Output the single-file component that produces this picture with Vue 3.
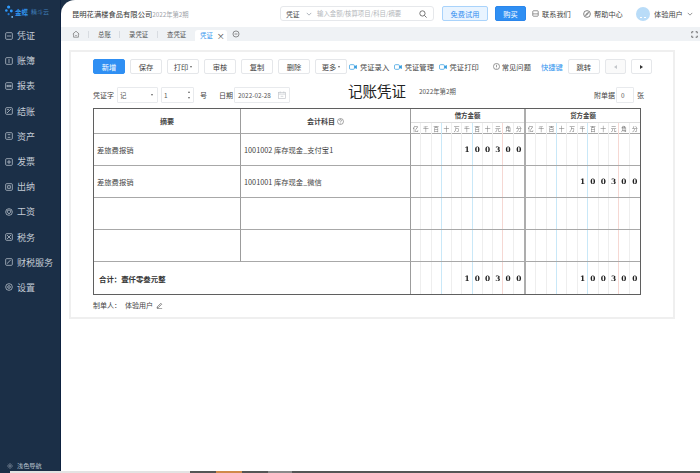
<script setup>
const navItems = [
  { label: "凭证", icon: "M3 6h6" },
  { label: "账簿", icon: "M6 3v6" },
  { label: "报表", icon: "M3 5h6v2H3z" },
  { label: "结账", icon: "M3 9l6-6M3 4h3" },
  { label: "资产", icon: "M4 4h4M4 8h4" },
  { label: "发票", icon: "M3 6h6M6 3v6" },
  { label: "出纳", icon: "M4 4h4v4H4z" },
  { label: "工资", icon: "M6 3l2.5 1v2L6 9 3.5 6V4z", round: true },
  { label: "税务", icon: "M3 3l6 6M9 3L3 9" },
  { label: "财税服务", icon: "M3.5 8.5l2-3 3-2" },
  { label: "设置", icon: "M4 6a2 2 0 1 0 4 0a2 2 0 1 0-4 0", round: true },
];

const tools = ["保存", "打印", "审核", "复制", "删除", "更多"];
const carets = ["打印", "更多"];
const links = ["凭证录入", "凭证管理", "凭证打印"];
const units = ["亿", "千", "百", "十", "万", "千", "百", "十", "元", "角", "分"];
const amount = ["", "", "", "", "", "1", "0", "0", "3", "0", "0"];
const empty = units.map(() => "");

const rows = [
  { summary: "差旅费报销", subject: "1001002 库存现金_支付宝1", debit: amount, credit: empty },
  { summary: "差旅费报销", subject: "1001001 库存现金_微信", debit: empty, credit: amount },
  { summary: "", subject: "", debit: empty, credit: empty },
  { summary: "", subject: "", debit: empty, credit: empty },
];

// 每隔三位一条蓝线，元角之间红线
const lineClass = (i) => {
  if (i === 2 || i === 5) return "line-blue";
  if (i === 8) return "line-red";
  return i === 10 ? "line-none" : "";
};
</script>

<template>
  <div class="page">
    <div class="shell">
      <aside class="sidebar">
        <div class="logo">
          <svg class="logo-mark" viewBox="0 0 10 16">
            <circle cx="4" cy="3" r="1.8" fill="#2f9bff" />
            <circle cx="1.5" cy="7" r="1.4" fill="#2f9bff" />
            <circle cx="7" cy="7.5" r="1.6" fill="#2f9bff" />
            <circle cx="4" cy="11" r="1.2" fill="#1f78d6" />
            <circle cx="8" cy="14" r="1" fill="#7cc4ff" />
          </svg>
          <span class="logo-name">金蝶</span>
          <span class="logo-sub">精斗云</span>
        </div>
        <nav class="nav">
          <div v-for="item in navItems" :key="item.label" class="nav-item">
            <svg class="nav-icon" viewBox="0 0 12 12" fill="none" stroke="#c3cbd5" stroke-width="1.1">
              <circle v-if="item.round" cx="6" cy="6" r="5" />
              <rect v-else x="1" y="1" width="10" height="10" rx="1.5" />
              <path :d="item.icon" />
            </svg>
            <span>{{ item.label }}</span>
          </div>
        </nav>
        <div class="nav-foot">
          <svg class="sun" viewBox="0 0 10 10" fill="none" stroke="#b9c2cd" stroke-width="0.9">
            <circle cx="5" cy="5" r="2" />
            <path d="M5 0v1.5M5 8.5V10M0 5h1.5M8.5 5H10M1.5 1.5l1 1M7.5 7.5l1 1M8.5 1.5l-1 1M2.5 7.5l-1 1" />
          </svg>
          <span>浅色导航</span>
        </div>
      </aside>

      <main class="main">
        <header class="topbar">
          <div class="company">昆明花满楼食品有限公司<span class="period">2022年第2期</span></div>
          <div class="search">
            <span class="search-type">凭证</span>
            <svg class="chevron" viewBox="0 0 8 5" fill="none" stroke="#8a929c" stroke-width="0.9"><path d="M1 1l3 3 3-3" /></svg>
            <span class="search-hint">输入金额/核算项目/科目/摘要</span>
            <svg class="search-icon" viewBox="0 0 10 10" fill="none" stroke="#555" stroke-width="1"><circle cx="4.3" cy="4.3" r="3.3" /><path d="M6.8 6.8L9.5 9.5" /></svg>
          </div>
          <button class="btn-trial">免费试用</button>
          <button class="btn-buy">购买</button>
          <div class="top-link contact">
            <svg viewBox="0 0 9 9" fill="none" stroke="#555" stroke-width="0.8"><rect x="1" y="1" width="7" height="7" rx="1" /><path d="M1 5h7" /></svg>
            <span>联系我们</span>
          </div>
          <div class="top-link help">
            <svg viewBox="0 0 9 9" fill="none" stroke="#555" stroke-width="0.8"><circle cx="4.5" cy="4.5" r="3.8" /><path d="M6.2 2.8L5 5 2.8 6.2 4 4z" /></svg>
            <span>帮助中心</span>
          </div>
          <div class="avatar"><i></i><i></i></div>
          <span class="user">体验用户</span>
          <svg class="chevron user-arrow" viewBox="0 0 8 5" fill="none" stroke="#666" stroke-width="0.9"><path d="M1 1l3 3 3-3" /></svg>
        </header>

        <div class="tabs">
          <svg class="home" viewBox="0 0 10 10" fill="none" stroke="#666" stroke-width="0.8"><path d="M1 5l4-3.5L9 5M2 4.5V9h6V4.5M4 7h2" /></svg>
          <span class="tab-sep"></span>
          <span class="tab tab-a">总账</span>
          <span class="tab-sep"></span>
          <span class="tab">录凭证</span>
          <span class="tab-sep"></span>
          <span class="tab">查凭证</span>
          <div class="tab-active">
            <span>凭证</span>
            <span class="tab-close">×</span>
          </div>
          <svg class="tab-more" viewBox="0 0 10 10" fill="none" stroke="#555" stroke-width="0.8"><circle cx="5" cy="5" r="3.8" /><path d="M3.2 5h3.6" /></svg>
          <svg class="expand" viewBox="0 0 9 9" fill="none" stroke="#444" stroke-width="1"><path d="M1 3V1h2M6 1h2v2M8 6v2H6M3 8H1V6" /></svg>
        </div>

        <section class="content">
          <div class="card">
            <div class="toolbar">
              <button class="btn btn-primary">新增</button>
              <button v-for="t in tools" :key="t" class="btn">
                {{ t }}<i v-if="carets.includes(t)" class="caret"></i>
              </button>
              <div class="links">
                <a v-for="l in links" :key="l" class="video-link">
                  <svg viewBox="0 0 10 7" fill="none" stroke="#2f9bdf" stroke-width="0.9"><rect x="0.6" y="0.6" width="6.2" height="5.8" rx="1.4" /><path d="M7 3l2.4-1.4v3.8L7 4z" fill="#2f9bdf" /></svg>
                  <span>{{ l }}</span>
                </a>
              </div>
              <div class="faq">
                <svg viewBox="0 0 8 8" fill="none" stroke="#444" stroke-width="0.6"><circle cx="4" cy="4" r="3.5" /><path d="M4 2v2.6M4 5.4v.8" /></svg>
                <span>常见问题</span>
              </div>
              <a class="shortcut">快捷键</a>
              <button class="btn">跳转</button>
              <button class="btn btn-arrow disabled"><i class="arrow-left"></i></button>
              <button class="btn btn-arrow"><i class="arrow-right"></i></button>
            </div>

            <div class="voucher-head">
              <span class="field-label">凭证字</span>
              <div class="input select"><span>记</span><i class="caret"></i></div>
              <div class="input number">
                <span>1</span>
                <span class="spin"><i class="spin-up"></i><i class="spin-down"></i></span>
              </div>
              <span class="hao">号</span>
              <span class="date-label">日期</span>
              <div class="input date">
                <span>2022-02-28</span>
                <svg viewBox="0 0 9 9" fill="none" stroke="#c4c8cd" stroke-width="0.8"><rect x="0.7" y="1.5" width="7.6" height="7" /><path d="M2.5 0.5v2M6.5 0.5v2M0.7 3.5h7.6M3 6h3" /></svg>
              </div>
              <h1 class="title">记账凭证</h1>
              <span class="title-period">2022年第2期</span>
              <span class="attach-label">附单据</span>
              <div class="input attach"><span>0</span></div>
              <span class="attach-unit">张</span>
            </div>

            <div class="voucher">
              <div class="cell head">摘要</div>
              <div class="cell head">
                会计科目
                <svg class="q-icon" viewBox="0 0 8 8" fill="none" stroke="#555" stroke-width="0.6"><circle cx="4" cy="4" r="3.4" /><path d="M2.9 3a1.1 1.1 0 1 1 1.6 1c-.4.2-.5.4-.5.8M4 5.6v.7" /></svg>
              </div>
              <div v-for="(side, s) in ['借方金额', '贷方金额']" :key="side" class="cell amount-head" :class="s ? 'credit' : 'debit'">
                <div class="amount-title">{{ side }}</div>
                <div class="digits units">
                  <span v-for="(u, i) in units" :key="i" :class="lineClass(i)">{{ u }}</span>
                </div>
              </div>

              <template v-for="(row, r) in rows" :key="r">
                <div class="cell text">{{ row.summary }}</div>
                <div class="cell text">{{ row.subject }}</div>
                <div v-for="(side, s) in [row.debit, row.credit]" :key="s" class="cell amount" :class="s ? 'credit' : 'debit'">
                  <div class="digits">
                    <span v-for="(d, i) in side" :key="i" :class="lineClass(i)">{{ d }}</span>
                  </div>
                </div>
              </template>

              <div class="cell total foot">合计：壹仟零叁元整</div>
              <div v-for="n in 2" :key="n" class="cell amount foot" :class="n === 2 ? 'credit' : 'debit'">
                <div class="digits">
                  <span v-for="(d, i) in amount" :key="i" :class="lineClass(i)">{{ d }}</span>
                </div>
              </div>
            </div>

            <div class="maker">
              <span>制单人：</span>
              <span class="maker-name">体验用户</span>
              <svg viewBox="0 0 8 8" fill="none" stroke="#444" stroke-width="0.7"><path d="M1.5 5.5L5.5 1.5l1 1-4 4-1.3.3zM1 7.7h6" /></svg>
            </div>
          </div>
        </section>
      </main>
    </div>

    <div class="taskbar">
      <span class="task-gap"></span>
      <span class="task-light"></span>
      <span class="task-dark"></span>
      <span class="task-orange"></span>
      <span class="task-dark"></span>
      <span class="task-grey"></span>
      <span class="task-rest"></span>
    </div>
  </div>
</template>

<style scoped>
.page {
  width: 700px;
  height: 473px;
  display: flex;
  flex-direction: column;
  overflow: hidden;
  font-family: "Noto Sans CJK SC", "Noto Sans", sans-serif;
  font-size: 7px;
  color: #444;
  background: #1b2f47;
}

.shell {
  flex: 1;
  min-height: 0;
  display: flex;
}

.sidebar {
  width: 61px;
  flex-shrink: 0;
  display: flex;
  flex-direction: column;
  background: #1b2f47;
  border-right: 1px solid #0e2240;
  box-sizing: border-box;
}

.logo {
  height: 23px;
  display: flex;
  align-items: center;
  padding-left: 5px;
}

.logo-mark {
  width: 9px;
  height: 15px;
  margin-right: 1px;
}

.logo-name {
  font-size: 6.5px;
  font-weight: 700;
  color: #2f94ee;
}

.logo-sub {
  font-size: 6px;
  color: #3f7fb8;
  margin-left: 3px;
}

.nav-item {
  height: 25.2px;
  display: flex;
  align-items: center;
  padding-left: 5px;
  font-size: 9px;
  color: #c3cbd5;
}

.nav-icon {
  width: 8px;
  height: 8px;
  margin-right: 4px;
}

.nav-foot {
  margin-top: auto;
  height: 9px;
  margin-bottom: 1px;
  display: flex;
  align-items: center;
  padding-left: 7px;
  font-size: 6.2px;
  color: #b9c2cd;
}

.sun {
  width: 6px;
  height: 6px;
  margin-right: 4px;
}

.main {
  flex: 1;
  min-width: 0;
  display: flex;
  flex-direction: column;
  background: #fff;
  border-top-left-radius: 14px;
}

.topbar {
  height: 27px;
  display: flex;
  align-items: center;
  padding-left: 11px;
  flex-shrink: 0;
}

.company {
  width: 208px;
  font-size: 7.3px;
  color: #333;
  white-space: nowrap;
}

.period {
  font-size: 6.3px;
  color: #a0a4a9;
}

.search {
  width: 154px;
  height: 15px;
  box-sizing: border-box;
  display: flex;
  align-items: center;
  padding: 0 5px;
  border: 1px solid #e6e8eb;
  border-radius: 3px;
}

.search-type {
  font-size: 6.8px;
  color: #444;
  width: 20px;
}

.chevron {
  width: 6px;
  height: 4px;
}

.search-hint {
  margin-left: 5px;
  font-size: 6.4px;
  color: #b4b7bb;
  white-space: nowrap;
  flex: 1;
}

.search-icon {
  width: 8px;
  height: 8px;
  margin-right: 1px;
}

.btn-trial,
.btn-buy {
  height: 15px;
  padding: 0;
  font-family: inherit;
  font-size: 7.2px;
  border-radius: 2px;
}

.btn-trial {
  width: 46px;
  margin-left: 8px;
  border: 1px solid #a9d3fb;
  background: #e9f4ff;
  color: #2f8df0;
}

.btn-buy {
  width: 31px;
  margin-left: 7px;
  border: 1px solid #2a86ec;
  background: #2f8ff3;
  color: #fff;
}

.top-link {
  display: flex;
  align-items: center;
  font-size: 7.2px;
  color: #444;
  white-space: nowrap;
}

.top-link svg {
  width: 7px;
  height: 7px;
  margin-right: 3px;
}

.contact {
  margin-left: 6px;
  width: 51px;
}

.help svg {
  width: 8px;
  height: 8px;
}

.help {
  width: 53px;
}

.avatar {
  width: 14px;
  height: 14px;
  border-radius: 50%;
  background: #b9dcf8;
  display: flex;
  justify-content: center;
  align-items: flex-end;
  gap: 2px;
  padding-bottom: 3px;
  box-sizing: border-box;
}

.avatar i {
  width: 2px;
  height: 1px;
  background: #fff;
}

.user {
  margin-left: 4px;
  font-size: 7.2px;
  width: 33px;
  white-space: nowrap;
}

.tabs {
  height: 14px;
  flex-shrink: 0;
  display: flex;
  align-items: center;
  background: #eff2f5;
  padding-left: 11px;
}

.home {
  width: 8px;
  height: 8px;
}

.tab-sep {
  width: 1px;
  height: 7px;
  background: #d8dce1;
  margin: 0 8px;
}

.tab {
  font-size: 6.4px;
  color: #555;
  width: 19px;
  text-align: center;
  margin: 0 1px;
  white-space: nowrap;
}

.tab-a {
  width: 12px;
}

.tab-active {
  align-self: flex-end;
  height: 11px;
  width: 32px;
  margin-left: 8px;
  box-sizing: border-box;
  padding-left: 5px;
  display: flex;
  align-items: center;
  background: #fff;
  border-radius: 3px 3px 0 0;
  color: #2f94ee;
  font-size: 6.4px;
}

.tab-close {
  margin-left: 4px;
  color: #444;
  font-size: 8px;
  line-height: 1;
}

.tab-more {
  width: 8px;
  height: 8px;
  margin-left: 5px;
}

.expand {
  width: 7px;
  height: 7px;
  margin-left: auto;
  margin-right: 2px;
}

.content {
  flex: 1;
  padding: 9px 25px 0 8px;
}

.card {
  width: 606px;
  height: 269px;
  box-sizing: border-box;
  border: 2px solid #efefef;
  padding: 7px 22px 0;
}

.toolbar {
  display: flex;
  align-items: center;
  gap: 5px;
  height: 15px;
}

.btn {
  width: 32px;
  height: 15px;
  padding: 0;
  display: flex;
  align-items: center;
  justify-content: center;
  box-sizing: border-box;
  font-family: inherit;
  font-size: 7.3px;
  color: #444;
  background: #fff;
  border: 1px solid #e5e7ea;
  border-radius: 2px;
  flex-shrink: 0;
}

.btn-primary {
  background: #2f8ff3;
  border-color: #2f8ff3;
  color: #fff;
}

.caret {
  width: 0;
  height: 0;
  margin-left: 2px;
  border-left: 1.5px solid transparent;
  border-right: 1.5px solid transparent;
  border-top: 2px solid #666;
}

.links {
  display: flex;
  gap: 4.6px;
  margin-left: -3px;
  white-space: nowrap;
}

.video-link {
  display: flex;
  align-items: center;
  font-size: 7.3px;
  color: #444;
}

.video-link svg {
  width: 8px;
  height: 6px;
  margin-right: 3px;
}

.faq {
  display: flex;
  align-items: center;
  margin-left: 9px;
  font-size: 7.3px;
  white-space: nowrap;
}

.faq svg {
  width: 7px;
  height: 7px;
  margin-right: 2px;
}

.shortcut {
  margin-left: 5px;
  font-size: 7.3px;
  color: #2f94ee;
  white-space: nowrap;
}

.btn-arrow {
  width: 21px;
}

.disabled {
  background: #fafafa;
}

.arrow-left,
.arrow-right {
  width: 0;
  height: 0;
  border-top: 2.5px solid transparent;
  border-bottom: 2.5px solid transparent;
}

.arrow-left {
  border-right: 3.5px solid #c4c7cb;
}

.arrow-right {
  border-left: 3.5px solid #333;
}

.voucher-head {
  height: 20px;
  margin-top: 9px;
  display: flex;
  align-items: flex-end;
  white-space: nowrap;
}

.field-label {
  width: 24px;
  height: 16px;
  line-height: 16px;
  font-size: 7px;
}

.input {
  height: 16px;
  box-sizing: border-box;
  display: flex;
  align-items: center;
  border: 1px solid #e8eaed;
  border-radius: 1px;
  padding: 0 2px;
  font-size: 6.4px;
  color: #555;
}

.select {
  width: 41px;
  justify-content: space-between;
  padding-right: 4px;
}

.number {
  width: 33px;
  margin-left: 3px;
  justify-content: space-between;
}

.spin {
  display: flex;
  flex-direction: column;
  gap: 4px;
  margin-right: 1px;
}

.spin-up,
.spin-down {
  width: 0;
  height: 0;
  border-left: 1.5px solid transparent;
  border-right: 1.5px solid transparent;
}

.spin-up {
  border-bottom: 2px solid #666;
}

.spin-down {
  border-top: 2px solid #666;
}

.hao,
.date-label {
  height: 16px;
  line-height: 16px;
  font-size: 7px;
}

.hao {
  margin-left: 6px;
}

.date-label {
  margin-left: 12px;
  margin-right: 1px;
}

.date {
  width: 56px;
  justify-content: space-between;
  padding: 0 3px;
}

.date svg {
  width: 8px;
  height: 8px;
}

.title {
  align-self: flex-start;
  margin: 0 0 0 58px;
  font-size: 14.5px;
  line-height: 15px;
  font-weight: 400;
  color: #222;
}

.title-period {
  align-self: flex-start;
  margin: 4px 0 0 13px;
  font-size: 6.4px;
  line-height: 10px;
  color: #555;
}

.attach-label {
  margin-left: auto;
  margin-right: 1px;
  height: 16px;
  line-height: 16px;
  font-size: 7px;
}

.attach {
  width: 18px;
  padding-left: 4px;
}

.attach-unit {
  height: 16px;
  line-height: 16px;
  font-size: 7px;
  margin-left: 3px;
  margin-right: 7px;
}

.voucher {
  width: 548px;
  height: 187px;
  margin-top: 5px;
  box-sizing: border-box;
  display: grid;
  grid-template-columns: 147px 170px 115px 1fr;
  grid-template-rows: 25px 32px 32px 32px 32px 1fr;
  border: 1px solid #5f5f5f;
}

.cell {
  box-sizing: border-box;
  border-right: 1px solid #9c9c9c;
  border-bottom: 1px solid #a8a8a8;
  display: flex;
  align-items: center;
  min-width: 0;
}

.debit {
  border-right: 2px solid #adadad;
}

.credit {
  border-right: 0;
}

.foot {
  border-bottom: 0;
}

.head {
  justify-content: center;
  font-size: 7px;
  font-weight: 700;
  color: #444;
}

.q-icon {
  width: 7px;
  height: 7px;
  margin-left: 2px;
}

.amount-head {
  display: block;
}

.amount-title {
  height: 13px;
  line-height: 13px;
  text-align: center;
  font-size: 6.4px;
  font-weight: 700;
  color: #444;
  border-bottom: 1px solid #ddd;
}

.digits {
  width: 100%;
  height: 100%;
  display: grid;
  grid-template-columns: repeat(11, 1fr);
  will-change: opacity;
}

.units {
  height: 11px;
}

.digits span {
  display: flex;
  align-items: center;
  justify-content: center;
  border-right: 1px solid #eeeeee;
  font-family: "DejaVu Serif", "Liberation Serif", serif;
  font-size: 7.4px;
  font-weight: 700;
  color: #222;
}

.units span {
  font-family: "Noto Sans CJK SC", sans-serif;
  font-size: 5.8px;
  font-weight: 400;
  color: #777;
}

.digits .line-blue {
  border-right-color: #c9e8f8;
}

.digits .line-red {
  border-right-color: #f6d8d3;
}

.digits .line-none {
  border-right: 0;
}

.text {
  padding-left: 3px;
  font-size: 7.3px;
  color: #444;
  white-space: nowrap;
}

.total {
  grid-column: span 2;
  padding-left: 5px;
  font-size: 7.4px;
  font-weight: 700;
  color: #333;
}

.maker {
  display: flex;
  align-items: center;
  height: 20px;
  font-size: 7px;
}

.maker-name {
  margin-left: 4px;
}

.maker svg {
  width: 7px;
  height: 7px;
  margin-left: 3px;
}

.taskbar {
  height: 2px;
  flex-shrink: 0;
  display: flex;
  background: #1b2f47;
}

.task-gap {
  width: 10px;
}

.task-light {
  width: 180px;
  background: #e3e3e3;
}

.task-dark {
  width: 26px;
  background: #555;
}

.task-orange {
  width: 26px;
  background: #d08a4a;
}

.task-grey {
  width: 24px;
  background: #8a8a8a;
}

.task-rest {
  flex: 1;
  background: #555;
}
</style>

<style>
html,
body {
  margin: 0;
  background: #fff;
}
</style>
